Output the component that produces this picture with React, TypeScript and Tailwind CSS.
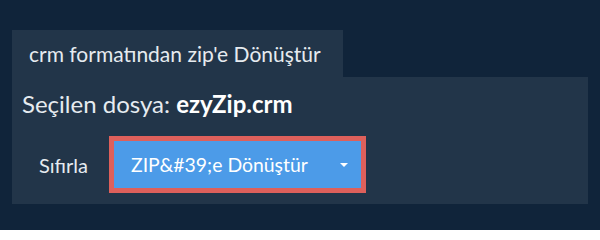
export default function App() {
  return (
    <div
      className="w-[600px] h-[230px] bg-[#10243a] pt-[30px] px-[12px]"
      style={{ fontFamily: "Lato, 'Noto Sans', sans-serif" }}
    >
      <div className="flex">
        <div className="h-[47px] w-[331px] bg-[#223549] flex items-center pl-[17px] text-[21px] text-[#e6ebf0]">
          crm formatından zip'e Dönüştür
        </div>
      </div>
      <div className="h-[127px] bg-[#223549] pt-[10px] px-[10px]">
        <div className="text-[24px] text-[#e6ebf0] leading-[34px]">
          Seçilen dosya: <b className="font-bold text-white">ezyZip.crm</b>
        </div>
        <div className="flex items-center mt-[15px]">
          <button className="text-[20px] text-[#e6ebf0] px-[17px] h-[47px]">Sıfırla</button>
          <div className="ml-[4px] border-[5px] border-[#de605b]">
            <button className="w-[247px] h-[47px] bg-[#4c9be8] flex items-center justify-between pl-[17px] pr-[13px] text-[19.4px] text-white">
              <span>ZIP&amp;#39;e Dönüştür</span>
              <svg width="8" height="4" viewBox="0 0 8 4">
                <path d="M0 0h8L4 4z" fill="#fff" />
              </svg>
            </button>
          </div>
        </div>
      </div>
    </div>
  );
}
